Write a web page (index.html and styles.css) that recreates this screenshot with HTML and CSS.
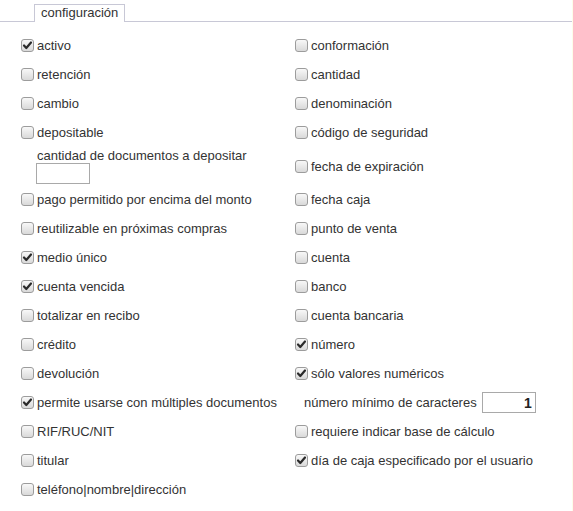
FILE: index.html
```html
<!DOCTYPE html>
<html>
<head>
<meta charset="utf-8">
<link rel="stylesheet" href="styles.css">
</head>
<body>
<div class="page">
  <div class="tabs"><div class="tab">configuración</div></div>
  <div class="grid">
    <label class="cell"><span class="cb on"><svg viewBox="0 0 11 11"><path d="M2 5.5 L4.3 8 L9 2.5" /></svg></span>activo</label>
    <label class="cell"><span class="cb"></span>conformación</label>
    <label class="cell"><span class="cb"></span>retención</label>
    <label class="cell"><span class="cb"></span>cantidad</label>
    <label class="cell"><span class="cb"></span>cambio</label>
    <label class="cell"><span class="cb"></span>denominación</label>
    <label class="cell"><span class="cb"></span>depositable</label>
    <label class="cell"><span class="cb"></span>código de seguridad</label>
    <div class="cell sub">
      <span class="sublabel">cantidad de documentos a depositar</span>
      <input class="field" type="text" value="">
    </div>
    <label class="cell"><span class="cb"></span>fecha de expiración</label>
    <label class="cell"><span class="cb"></span>pago permitido por encima del monto</label>
    <label class="cell"><span class="cb"></span>fecha caja</label>
    <label class="cell"><span class="cb"></span>reutilizable en próximas compras</label>
    <label class="cell"><span class="cb"></span>punto de venta</label>
    <label class="cell"><span class="cb on"><svg viewBox="0 0 11 11"><path d="M2 5.5 L4.3 8 L9 2.5" /></svg></span>medio único</label>
    <label class="cell"><span class="cb"></span>cuenta</label>
    <label class="cell"><span class="cb on"><svg viewBox="0 0 11 11"><path d="M2 5.5 L4.3 8 L9 2.5" /></svg></span>cuenta vencida</label>
    <label class="cell"><span class="cb"></span>banco</label>
    <label class="cell"><span class="cb"></span>totalizar en recibo</label>
    <label class="cell"><span class="cb"></span>cuenta bancaria</label>
    <label class="cell"><span class="cb"></span>crédito</label>
    <label class="cell"><span class="cb on"><svg viewBox="0 0 11 11"><path d="M2 5.5 L4.3 8 L9 2.5" /></svg></span>número</label>
    <label class="cell"><span class="cb"></span>devolución</label>
    <label class="cell"><span class="cb on"><svg viewBox="0 0 11 11"><path d="M2 5.5 L4.3 8 L9 2.5" /></svg></span>sólo valores numéricos</label>
    <label class="cell"><span class="cb on"><svg viewBox="0 0 11 11"><path d="M2 5.5 L4.3 8 L9 2.5" /></svg></span>permite usarse con múltiples documentos</label>
    <div class="cell inline"><span>número mínimo de caracteres</span><input class="field num" type="text" value="1"></div>
    <label class="cell"><span class="cb"></span>RIF/RUC/NIT</label>
    <label class="cell"><span class="cb"></span>requiere indicar base de cálculo</label>
    <label class="cell"><span class="cb"></span>titular</label>
    <label class="cell"><span class="cb on"><svg viewBox="0 0 11 11"><path d="M2 5.5 L4.3 8 L9 2.5" /></svg></span>día de caja especificado por el usuario</label>
    <label class="cell"><span class="cb"></span>teléfono|nombre|dirección</label>
    <div class="cell"></div>
  </div>
</div>
</body>
</html>
```
FILE: styles.css
```css
html, body {
  margin: 0;
  padding: 0;
  background: #fff;
}
body {
  font-family: "Liberation Sans", Arial, sans-serif;
  font-size: 13px;
  color: #333;
}
.page {
  width: 572px;
  min-height: 511px;
  border-right: 1px solid #fdfde9;
}
.tabs {
  display: flex;
  height: 22px;
  box-sizing: border-box;
  border-bottom: 1px solid #c8c8d6;
  padding-left: 34px;
}
.tab {
  margin-top: 4px;
  height: 18px;
  box-sizing: border-box;
  border: 1px solid #c8c8d6;
  border-bottom: none;
  background: #fff;
  padding: 0 6px;
  line-height: 15px;
  color: #333;
}
.grid {
  display: grid;
  grid-template-columns: 274px 1fr;
  grid-auto-rows: minmax(29px, auto);
  padding-left: 17px;
  margin-top: 9px;
}
.cell {
  display: flex;
  align-items: center;
  line-height: 15px;
  white-space: nowrap;
}
.cb {
  display: inline-flex;
  align-items: center;
  justify-content: center;
  width: 13px;
  height: 13px;
  box-sizing: border-box;
  margin: 0 3px 0 4px;
  border: 1px solid #9c9c9c;
  border-radius: 3px;
  background: linear-gradient(#f8f8f8, #d9d9d9);
}
.cb svg {
  width: 11px;
  height: 11px;
}
.cb svg path {
  fill: none;
  stroke: #2a2a2a;
  stroke-width: 2.2;
  stroke-linecap: round;
  stroke-linejoin: round;
}
.sub {
  flex-direction: column;
  align-items: flex-start;
  padding: 1px 0 1px 20px;
}
.field {
  width: 54px;
  height: 21px;
  box-sizing: border-box;
  border: 1px solid #a9a9a9;
  margin: 0;
  padding: 0 3px;
  font-family: "Liberation Sans", Arial, sans-serif;
  font-size: 13px;
  color: #222;
  background: #fff;
}
.sub .field {
  margin-left: -1px;
}
.inline {
  padding-left: 13px;
}
.inline .field {
  margin-left: 5px;
}
.num {
  text-align: right;
  font-weight: bold;
  font-size: 14px;
}
```
